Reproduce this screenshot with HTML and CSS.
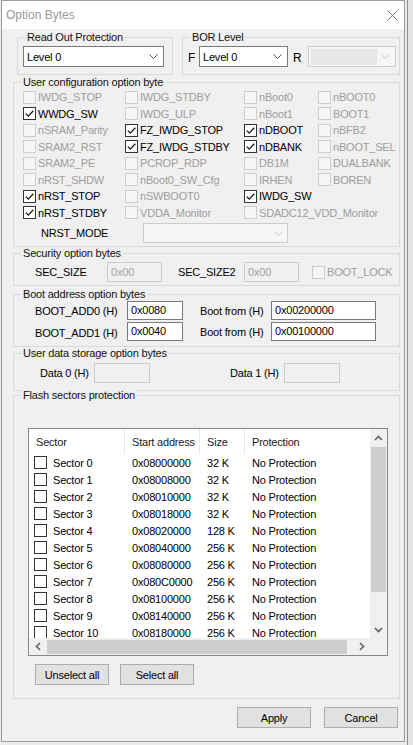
FILE: index.html
```html
<!DOCTYPE html>
<html>
<head>
<meta charset="utf-8">
<title>Option Bytes</title>
<link rel="stylesheet" href="styles.css">
</head>
<body>
<div class="desk">
  <div class="window">
    <div class="titlebar">
      <span class="title">Option Bytes</span>
      <svg class="close" width="11" height="11" viewBox="0 0 11 11"><path d="M0.5 0.5 L10.5 10.5 M10.5 0.5 L0.5 10.5" stroke="#7a7a7a" stroke-width="1" fill="none"/></svg>
    </div>
    <div class="client">
      <div class="toprow">
        <div class="group g-rdp">
          <div class="legend">Read Out Protection</div>
          <div class="gbody rdp-body">
            <div class="combo w-rdp"><span>Level 0</span><svg class="chev" width="9" height="5" viewBox="0 0 9 5"><path d="M0.5 0.5 L4.5 4.5 L8.5 0.5" stroke="#555" stroke-width="1" fill="none"/></svg></div>
          </div>
        </div>
        <div class="group g-bor">
          <div class="legend">BOR Level</div>
          <div class="gbody bor-body">
            <span class="lbl-f">F</span>
            <div class="combo w-bor"><span>Level 0</span><svg class="chev" width="9" height="5" viewBox="0 0 9 5"><path d="M0.5 0.5 L4.5 4.5 L8.5 0.5" stroke="#555" stroke-width="1" fill="none"/></svg></div>
            <span class="lbl-r">R</span>
            <div class="combo disabled w-r"><span class="fill"></span><svg class="chev" width="9" height="5" viewBox="0 0 9 5"><path d="M0.5 0.5 L4.5 4.5 L8.5 0.5" stroke="#c4c4c4" stroke-width="1" fill="none"/></svg></div>
          </div>
        </div>
      </div>

      <div class="group g-full g-user">
        <div class="legend">User configuration option byte</div>
        <div class="gbody user-body">
          <div class="cbgrid">
            <label class="ck dis"><span class="box"></span>IWDG_STOP</label>
            <label class="ck dis"><span class="box"></span>IWDG_STDBY</label>
            <label class="ck dis"><span class="box"></span>nBoot0</label>
            <label class="ck dis"><span class="box"></span>nBOOT0</label>

            <label class="ck"><span class="box on"><svg width="11" height="11" viewBox="0 0 11 11"><path d="M1.8 5.6 L4.3 8.1 L9.3 2.8" stroke="#1a1a1a" stroke-width="1.3" fill="none"/></svg></span>WWDG_SW</label>
            <label class="ck dis"><span class="box"></span>IWDG_ULP</label>
            <label class="ck dis"><span class="box"></span>nBoot1</label>
            <label class="ck dis"><span class="box"></span>BOOT1</label>

            <label class="ck dis"><span class="box"></span>nSRAM_Parity</label>
            <label class="ck"><span class="box on"><svg width="11" height="11" viewBox="0 0 11 11"><path d="M1.8 5.6 L4.3 8.1 L9.3 2.8" stroke="#1a1a1a" stroke-width="1.3" fill="none"/></svg></span>FZ_IWDG_STOP</label>
            <label class="ck"><span class="box on"><svg width="11" height="11" viewBox="0 0 11 11"><path d="M1.8 5.6 L4.3 8.1 L9.3 2.8" stroke="#1a1a1a" stroke-width="1.3" fill="none"/></svg></span>nDBOOT</label>
            <label class="ck dis"><span class="box"></span>nBFB2</label>

            <label class="ck dis"><span class="box"></span>SRAM2_RST</label>
            <label class="ck"><span class="box on"><svg width="11" height="11" viewBox="0 0 11 11"><path d="M1.8 5.6 L4.3 8.1 L9.3 2.8" stroke="#1a1a1a" stroke-width="1.3" fill="none"/></svg></span>FZ_IWDG_STDBY</label>
            <label class="ck"><span class="box on"><svg width="11" height="11" viewBox="0 0 11 11"><path d="M1.8 5.6 L4.3 8.1 L9.3 2.8" stroke="#1a1a1a" stroke-width="1.3" fill="none"/></svg></span>nDBANK</label>
            <label class="ck dis"><span class="box"></span>nBOOT_SEL</label>

            <label class="ck dis"><span class="box"></span>SRAM2_PE</label>
            <label class="ck dis"><span class="box"></span>PCROP_RDP</label>
            <label class="ck dis"><span class="box"></span>DB1M</label>
            <label class="ck dis"><span class="box"></span>DUALBANK</label>

            <label class="ck dis"><span class="box"></span>nRST_SHDW</label>
            <label class="ck dis"><span class="box"></span>nBoot0_SW_Cfg</label>
            <label class="ck dis"><span class="box"></span>IRHEN</label>
            <label class="ck dis"><span class="box"></span>BOREN</label>

            <label class="ck"><span class="box on"><svg width="11" height="11" viewBox="0 0 11 11"><path d="M1.8 5.6 L4.3 8.1 L9.3 2.8" stroke="#1a1a1a" stroke-width="1.3" fill="none"/></svg></span>nRST_STOP</label>
            <label class="ck dis"><span class="box"></span>nSWBOOT0</label>
            <label class="ck"><span class="box on"><svg width="11" height="11" viewBox="0 0 11 11"><path d="M1.8 5.6 L4.3 8.1 L9.3 2.8" stroke="#1a1a1a" stroke-width="1.3" fill="none"/></svg></span>IWDG_SW</label>
            <span></span>

            <label class="ck"><span class="box on"><svg width="11" height="11" viewBox="0 0 11 11"><path d="M1.8 5.6 L4.3 8.1 L9.3 2.8" stroke="#1a1a1a" stroke-width="1.3" fill="none"/></svg></span>nRST_STDBY</label>
            <label class="ck dis"><span class="box"></span>VDDA_Monitor</label>
            <label class="ck dis"><span class="box"></span>SDADC12_VDD_Monitor</label>
            <span></span>
          </div>
          <div class="nrst-row">
            <span class="nrst-lbl">NRST_MODE</span>
            <div class="combo disabled w-nrst"><svg class="chev" width="9" height="5" viewBox="0 0 9 5"><path d="M0.5 0.5 L4.5 4.5 L8.5 0.5" stroke="#c4c4c4" stroke-width="1" fill="none"/></svg></div>
          </div>
        </div>
      </div>

      <div class="group g-full g-sec">
        <div class="legend">Security option bytes</div>
        <div class="gbody sec-body">
          <span class="sec-l1">SEC_SIZE</span>
          <span class="edit disabled w55">0x00</span>
          <span class="sec-l2">SEC_SIZE2</span>
          <span class="edit disabled w55">0x00</span>
          <label class="ck dis bootlock"><span class="box"></span>BOOT_LOCK</label>
        </div>
      </div>

      <div class="group g-full g-boot">
        <div class="legend">Boot address option bytes</div>
        <div class="gbody boot-body">
          <div class="boot-row">
            <span class="boot-l1">BOOT_ADD0 (H)</span>
            <span class="edit w56">0x0080</span>
            <span class="boot-l2">Boot from (H)</span>
            <span class="edit w105">0x00200000</span>
          </div>
          <div class="boot-row">
            <span class="boot-l1 low">BOOT_ADD1 (H)</span>
            <span class="edit w56">0x0040</span>
            <span class="boot-l2">Boot from (H)</span>
            <span class="edit w105">0x00100000</span>
          </div>
        </div>
      </div>

      <div class="group g-full g-data">
        <div class="legend">User data storage option bytes</div>
        <div class="gbody data-body">
          <span class="data-l1">Data 0 (H)</span>
          <span class="edit disabled w56 tall"></span>
          <span class="data-l2">Data 1 (H)</span>
          <span class="edit disabled w56 tall"></span>
        </div>
      </div>

      <div class="group g-full g-flash">
        <div class="legend">Flash sectors protection</div>
        <div class="gbody flash-body">
          <div class="listbox">
            <div class="lv">
              <div class="lv-head">
                <span class="c1">Sector</span><span class="c2">Start address</span><span class="c3">Size</span><span class="c4">Protection</span>
              </div>
              <div class="lv-row"><span class="c1"><span class="box"></span>Sector 0</span><span class="c2">0x08000000</span><span class="c3">32 K</span><span class="c4">No Protection</span></div>
              <div class="lv-row"><span class="c1"><span class="box"></span>Sector 1</span><span class="c2">0x08008000</span><span class="c3">32 K</span><span class="c4">No Protection</span></div>
              <div class="lv-row"><span class="c1"><span class="box"></span>Sector 2</span><span class="c2">0x08010000</span><span class="c3">32 K</span><span class="c4">No Protection</span></div>
              <div class="lv-row"><span class="c1"><span class="box"></span>Sector 3</span><span class="c2">0x08018000</span><span class="c3">32 K</span><span class="c4">No Protection</span></div>
              <div class="lv-row"><span class="c1"><span class="box"></span>Sector 4</span><span class="c2">0x08020000</span><span class="c3">128 K</span><span class="c4">No Protection</span></div>
              <div class="lv-row"><span class="c1"><span class="box"></span>Sector 5</span><span class="c2">0x08040000</span><span class="c3">256 K</span><span class="c4">No Protection</span></div>
              <div class="lv-row"><span class="c1"><span class="box"></span>Sector 6</span><span class="c2">0x08080000</span><span class="c3">256 K</span><span class="c4">No Protection</span></div>
              <div class="lv-row"><span class="c1"><span class="box"></span>Sector 7</span><span class="c2">0x080C0000</span><span class="c3">256 K</span><span class="c4">No Protection</span></div>
              <div class="lv-row"><span class="c1"><span class="box"></span>Sector 8</span><span class="c2">0x08100000</span><span class="c3">256 K</span><span class="c4">No Protection</span></div>
              <div class="lv-row"><span class="c1"><span class="box"></span>Sector 9</span><span class="c2">0x08140000</span><span class="c3">256 K</span><span class="c4">No Protection</span></div>
              <div class="lv-row"><span class="c1"><span class="box"></span>Sector 10</span><span class="c2">0x08180000</span><span class="c3">256 K</span><span class="c4">No Protection</span></div>
            </div>
            <div class="vscroll">
              <span class="sb-btn"><svg width="9" height="6" viewBox="0 0 9 6"><path d="M1 5 L4.5 1.5 L8 5" stroke="#606060" stroke-width="1.6" fill="none"/></svg></span>
              <span class="vthumb"></span>
              <span class="vtrack"></span>
              <span class="sb-btn"><svg width="9" height="6" viewBox="0 0 9 6"><path d="M1 1 L4.5 4.5 L8 1" stroke="#606060" stroke-width="1.6" fill="none"/></svg></span>
            </div>
            <div class="hscroll">
              <span class="sb-btn"><svg width="6" height="9" viewBox="0 0 6 9"><path d="M5 1 L1.5 4.5 L5 8" stroke="#606060" stroke-width="1.6" fill="none"/></svg></span>
              <span class="hthumb"></span>
              <span class="htrack"></span>
              <span class="sb-btn"><svg width="6" height="9" viewBox="0 0 6 9"><path d="M1 1 L4.5 4.5 L1 8" stroke="#606060" stroke-width="1.6" fill="none"/></svg></span>
            </div>
            <div class="corner"></div>
          </div>
          <div class="sel-row">
            <button class="btn">Unselect all</button>
            <button class="btn">Select all</button>
          </div>
        </div>
      </div>

      <div class="dlg-buttons">
        <button class="btn">Apply</button>
        <button class="btn">Cancel</button>
      </div>
    </div>
  </div>
  <div class="strip"></div>
</div>
</body>
</html>
```

FILE: styles.css
```css
* { box-sizing: border-box; }
html, body { margin: 0; padding: 0; }
body {
  width: 413px;
  height: 745px;
  overflow: hidden;
  background: #ebebeb;
  font-family: "Liberation Sans", Arial, sans-serif;
  font-size: 11px;
  letter-spacing: -0.2px;
  color: #000;
}
.desk { display: flex; height: 745px; }

.window {
  margin-left: 1px;
  width: 406px;
  height: 742px;
  border: 1px solid #9c9c9c;
  background: #f0f0f0;
  display: flex;
  flex-direction: column;
}
.strip {
  width: 6px;
  height: 745px;
  margin-left: 2px;
  border-left: 1px solid #8e8e8e;
  background: #e4e4e4;
}

.titlebar {
  height: 28px;
  background: #fff;
  display: flex;
  align-items: center;
}
.title {
  margin-left: 4px;
  font-size: 12px;
  letter-spacing: 0;
  color: #9a9a9a;
}
.close { margin-left: auto; margin-right: 6px; }

.client { display: flex; flex-direction: column; }

/* group boxes */
.group {
  border: 1px solid #d9d9d9;
}
.legend {
  display: table;
  margin: -7px 0 0 7px;
  padding: 0 2px;
  height: 12px;
  line-height: 12px;
  background: #f0f0f0;
  color: #111;
  white-space: nowrap;
}
.g-full { margin-left: 11px; width: 387px; }

.toprow { display: flex; margin-top: 8px; }
.g-rdp { margin-left: 15px; width: 156px; }
.g-bor { margin-left: 9px; width: 218px; }
.rdp-body { padding: 3px 0 7px 5px; }
.bor-body { padding: 3px 0 7px 5px; display: flex; align-items: center; }
.lbl-f { width: 11px; font-size: 12px; line-height: 14px; padding-top: 3px; }
.lbl-r { margin-left: 5px; width: 15px; font-size: 12px; line-height: 14px; padding-top: 3px; }

/* combos */
.combo {
  height: 21px;
  border: 1px solid #7a7a7a;
  background: #fff;
  display: flex;
  align-items: center;
  padding-left: 3px;
}
.combo .chev { margin-left: auto; margin-right: 5px; }
.combo.disabled { border-color: #cccccc; background: #f6f6f6; }
.combo .fill { width: 66px; height: 16px; background: #e6e6e6; margin-left: -1px; }
.w-rdp { width: 141px; }
.w-bor { width: 89px; }
.w-r { width: 88px; }
.w-nrst { width: 145px; height: 20px; }
.w-nrst .chev { margin-right: 4px; }

/* checkboxes */
.box {
  width: 13px;
  height: 13px;
  flex: none;
  border: 1px solid #333;
  background: #fff;
  display: inline-flex;
  align-items: center;
  justify-content: center;
}
.ck {
  display: flex;
  align-items: center;
  white-space: nowrap;
}
.ck .box { margin-right: 2px; }
.ck.dis { color: #9d9d9d; }
.ck.dis .box { border-color: #cdcdcd; background: #f6f6f6; }

.user-body { padding: 1px 0 3px 9px; }
.cbgrid {
  display: grid;
  grid-template-columns: 102px 119px 74px 1fr;
  grid-auto-rows: 16.5px;
  align-items: center;
}
.nrst-row { display: flex; align-items: center; margin-top: 2px; }
.nrst-lbl { margin-left: 18px; width: 102px; }

/* edits */
.edit {
  display: flex;
  align-items: center;
  height: 19px;
  border: 1px solid #7a7a7a;
  background: #fff;
  padding-left: 3px;
  padding-bottom: 1px;
}
.edit.disabled { border-color: #cccccc; background: #f0f0f0; color: #a3a3a3; }
.edit.tall { height: 20px; }
.w55 { width: 55px; height: 20px; }
.w56 { width: 56px; }
.w105 { width: 105px; }

.sec-body { padding: 3px 0 3px 21px; display: flex; align-items: center; }
.sec-l1 { width: 72px; }
.sec-l2 { margin-left: 16px; width: 66px; }
.bootlock { margin-left: 13px; }

.g-sec { margin-top: 6px; }
.g-boot { margin-top: 8px; }
.g-data { margin-top: 6px; }
.g-flash { margin-top: 4px; }
.g-user { margin-top: 7px; }

.boot-body { padding: 1px 0 5px 21px; display: flex; flex-direction: column; gap: 2px; }
.boot-row { display: flex; align-items: center; }
.boot-l1 { width: 92px; }
.boot-l1.low { padding-top: 3px; }
.boot-l2 { margin-left: 17px; width: 71px; }

.data-body { padding: 4px 0 7px 26px; display: flex; align-items: center; }
.data-l1 { width: 54px; }
.data-l2 { margin-left: 80px; width: 54px; }

/* flash list */
.flash-body { padding: 27px 0 13px 14px; }
.listbox {
  width: 360px;
  height: 228px;
  border: 1px solid #828790;
  background: #fff;
  display: grid;
  grid-template-columns: 1fr 17px;
  grid-template-rows: 1fr 17px;
}
.lv { overflow: hidden; }
.lv-head, .lv-row {
  display: grid;
  grid-template-columns: 96px 75px 45px 1fr;
  white-space: nowrap;
}
.lv-head { height: 25px; align-items: center; color: #1a1a1a; }
.lv-head span { height: 25px; display: flex; align-items: center; padding-left: 7px; }
.lv-head .c1, .lv-head .c2, .lv-head .c3 { border-right: 1px solid #e8e8e8; }
.lv-row { height: 17px; align-items: center; }
.lv-row span { padding-left: 7px; }
.lv-row .c1 { display: flex; align-items: center; padding-left: 5px; }
.lv-row .c1 .box { margin-right: 6px; }

.vscroll {
  background: #f0f0f0;
  display: flex;
  flex-direction: column;
}
.sb-btn {
  flex: none;
  width: 17px;
  height: 17px;
  display: flex;
  align-items: center;
  justify-content: center;
}
.vthumb { height: 145px; margin: 1px 1px 0 1px; background: #cdcdcd; flex: none; }
.vtrack { flex: 1; }
.hscroll {
  background: #f0f0f0;
  display: flex;
  align-items: center;
}
.hthumb { width: 300px; height: 14px; margin-left: 1px; background: #cdcdcd; flex: none; }
.htrack { flex: 1; }
.corner { background: #f0f0f0; }

.sel-row { display: flex; gap: 11px; margin-top: 8px; padding-left: 7px; }

.btn {
  width: 74px;
  height: 21px;
  border: 1px solid #adadad;
  background: #e1e1e1;
  font-family: "Liberation Sans", Arial, sans-serif;
  font-size: 11px;
  letter-spacing: -0.2px;
  color: #000;
  padding: 0;
}
.dlg-buttons {
  display: flex;
  justify-content: flex-end;
  gap: 13px;
  margin-top: 8px;
  padding-right: 6px;
}
```
